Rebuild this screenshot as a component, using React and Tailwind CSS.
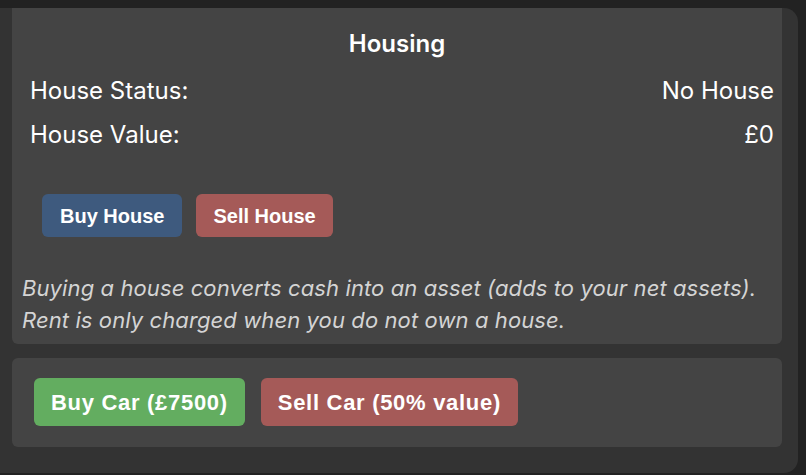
import React from 'react';

const BODY_FONT = { fontFamily: 'Inter, "Open Sans", sans-serif' };
const BTN_FONT = { fontFamily: '"Liberation Sans", Arial, sans-serif' };

const StatRow = ({ label, value }) => (
  <div className="flex items-center justify-between py-2 text-[24px] leading-[28px] text-white">
    <span>{label}</span>
    <span>{value}</span>
  </div>
);

const App = () => {
  return (
    <div className="min-h-screen bg-[#222222] pt-2" style={BODY_FONT}>
      <div className="w-[798px] h-[465px] bg-[#333333] rounded-r-[14px] pl-3 pr-4 flex flex-col gap-[14px]">
        <div className="bg-[#444444] rounded-b-md pt-[22px] pb-2">
          <h2 className="text-center text-[24px] leading-[28px] font-semibold text-white">Housing</h2>
          <div className="pl-[18px] pr-[8px] mt-[11px]">
            <StatRow label="House Status:" value="No House" />
            <StatRow label="House Value:" value="£0" />
          </div>
          <div className="flex gap-[14px] px-[30px] mt-[37px]" style={BTN_FONT}>
            <button className="h-[43px] px-[18px] rounded-md bg-[#3e5a7e] text-white font-bold text-[20px]">
              Buy House
            </button>
            <button className="h-[43px] px-[17px] rounded-md bg-[#a55a58] text-white font-bold text-[20px]">
              Sell House
            </button>
          </div>
          <p className="mt-[35px] px-[10px] italic text-[22px] leading-[32px] tracking-[0.1px] text-[#d4d4d4]">
            Buying a house converts cash into an asset (adds to your net assets).
            <br />
            Rent is only charged when you do not own a house.
          </p>
        </div>
        <div className="bg-[#444444] rounded-md px-[22px] pt-[20px] pb-[21px] flex gap-4" style={BTN_FONT}>
          <button className="h-[48px] px-[17px] rounded-md bg-[#63ad60] text-white font-bold text-[22px] tracking-[0.7px]">
            Buy Car (£7500)
          </button>
          <button className="h-[48px] px-[17px] rounded-md bg-[#a55a58] text-white font-bold text-[22px] tracking-[0.7px]">
            Sell Car (50% value)
          </button>
        </div>
      </div>
    </div>
  );
};

export default App;
